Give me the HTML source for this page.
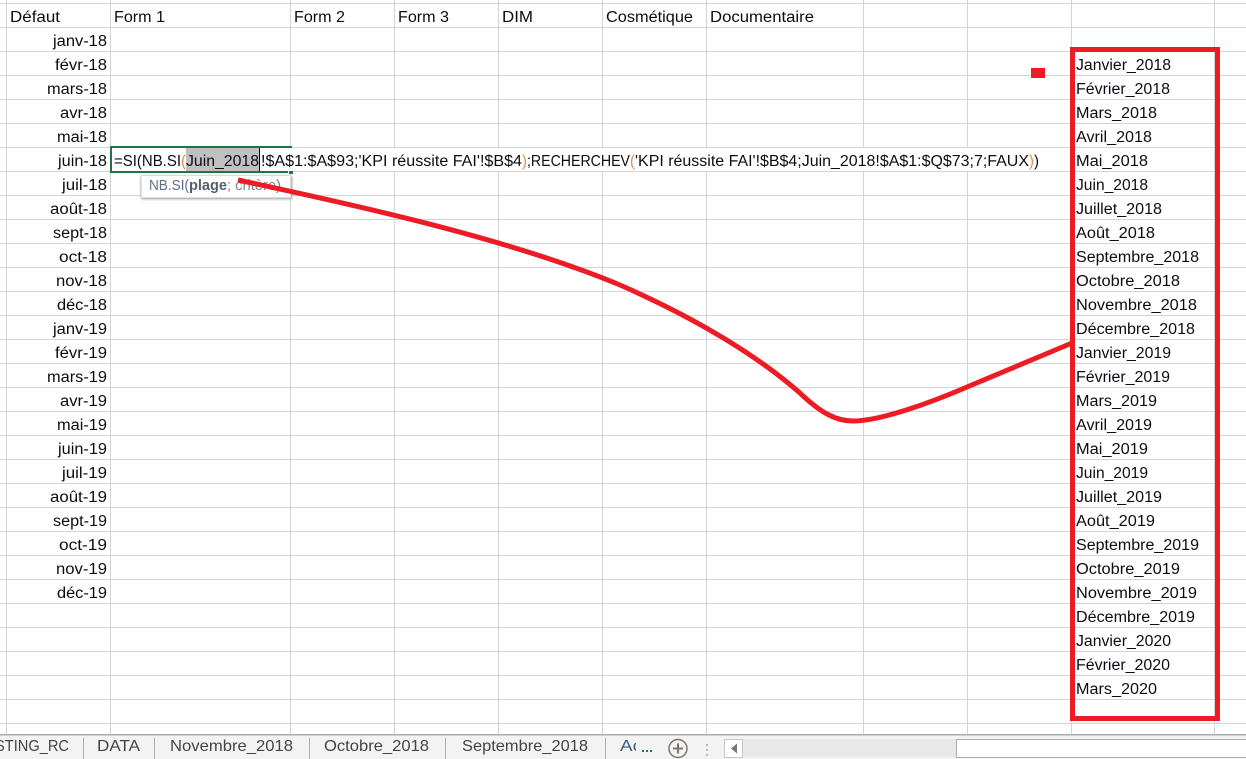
<!DOCTYPE html>
<html lang="fr"><head><meta charset="utf-8"><title>Excel</title>
<style>
html,body{margin:0;padding:0;background:#fff}
#p{position:relative;width:1246px;height:759px;overflow:hidden;background:#fff}
#g{position:absolute;left:0;top:0;width:1246px;height:734px;background-image:linear-gradient(#d4d4d4 1px,transparent 1px);background-size:100% 24px;background-position:0 3px}
.v{position:absolute;top:0;height:734px;width:1px;background:#d4d4d4}
svg{position:absolute;left:0;top:0}
text{font-family:"Liberation Sans",sans-serif;font-size:15.5px;fill:#0c0c14}
.t text{font-size:16px;fill:#444}
</style></head><body><div id="p">
<div id="g"></div>
<div class="v" style="left:6px"></div><div class="v" style="left:110px"></div><div class="v" style="left:290px"></div><div class="v" style="left:394px"></div><div class="v" style="left:498px"></div><div class="v" style="left:602px"></div><div class="v" style="left:706px"></div><div class="v" style="left:863px"></div><div class="v" style="left:967px"></div><div class="v" style="left:1071px"></div><div class="v" style="left:1214px"></div>
<svg width="1246" height="759" viewBox="0 0 1246 759">
<defs><filter id="s" x="-10%" y="-30%" width="120%" height="170%"><feGaussianBlur stdDeviation="1.2"/></filter></defs>
<g id="hdr">
<text x="10" y="22" textLength="50" lengthAdjust="spacingAndGlyphs">Défaut</text>
<text x="114" y="22" textLength="51" lengthAdjust="spacingAndGlyphs">Form 1</text>
<text x="294" y="22" textLength="51" lengthAdjust="spacingAndGlyphs">Form 2</text>
<text x="398" y="22" textLength="51" lengthAdjust="spacingAndGlyphs">Form 3</text>
<text x="502" y="22" textLength="31" lengthAdjust="spacingAndGlyphs">DIM</text>
<text x="606" y="22" textLength="87" lengthAdjust="spacingAndGlyphs">Cosmétique</text>
<text x="710" y="22" textLength="104" lengthAdjust="spacingAndGlyphs">Documentaire</text>
</g>
<g id="dates">
<text x="53" y="46" textLength="54" lengthAdjust="spacingAndGlyphs">janv-18</text>
<text x="55" y="70" textLength="52" lengthAdjust="spacingAndGlyphs">févr-18</text>
<text x="47" y="94" textLength="60" lengthAdjust="spacingAndGlyphs">mars-18</text>
<text x="60" y="118" textLength="47" lengthAdjust="spacingAndGlyphs">avr-18</text>
<text x="57" y="142" textLength="50" lengthAdjust="spacingAndGlyphs">mai-18</text>
<text x="58" y="166" textLength="49" lengthAdjust="spacingAndGlyphs">juin-18</text>
<text x="62" y="190" textLength="45" lengthAdjust="spacingAndGlyphs">juil-18</text>
<text x="50" y="214" textLength="57" lengthAdjust="spacingAndGlyphs">août-18</text>
<text x="53" y="238" textLength="54" lengthAdjust="spacingAndGlyphs">sept-18</text>
<text x="59" y="262" textLength="48" lengthAdjust="spacingAndGlyphs">oct-18</text>
<text x="56" y="286" textLength="51" lengthAdjust="spacingAndGlyphs">nov-18</text>
<text x="57" y="310" textLength="50" lengthAdjust="spacingAndGlyphs">déc-18</text>
<text x="53" y="334" textLength="54" lengthAdjust="spacingAndGlyphs">janv-19</text>
<text x="55" y="358" textLength="52" lengthAdjust="spacingAndGlyphs">févr-19</text>
<text x="47" y="382" textLength="60" lengthAdjust="spacingAndGlyphs">mars-19</text>
<text x="60" y="406" textLength="47" lengthAdjust="spacingAndGlyphs">avr-19</text>
<text x="57" y="430" textLength="50" lengthAdjust="spacingAndGlyphs">mai-19</text>
<text x="58" y="454" textLength="49" lengthAdjust="spacingAndGlyphs">juin-19</text>
<text x="62" y="478" textLength="45" lengthAdjust="spacingAndGlyphs">juil-19</text>
<text x="50" y="502" textLength="57" lengthAdjust="spacingAndGlyphs">août-19</text>
<text x="53" y="526" textLength="54" lengthAdjust="spacingAndGlyphs">sept-19</text>
<text x="59" y="550" textLength="48" lengthAdjust="spacingAndGlyphs">oct-19</text>
<text x="56" y="574" textLength="51" lengthAdjust="spacingAndGlyphs">nov-19</text>
<text x="57" y="598" textLength="50" lengthAdjust="spacingAndGlyphs">déc-19</text>
</g>
<g id="months">
<text x="1076" y="70" textLength="95" lengthAdjust="spacingAndGlyphs">Janvier_2018</text>
<text x="1076" y="94" textLength="94" lengthAdjust="spacingAndGlyphs">Février_2018</text>
<text x="1076" y="118" textLength="81" lengthAdjust="spacingAndGlyphs">Mars_2018</text>
<text x="1076" y="142" textLength="76" lengthAdjust="spacingAndGlyphs">Avril_2018</text>
<text x="1076" y="166" textLength="72" lengthAdjust="spacingAndGlyphs">Mai_2018</text>
<text x="1076" y="190" textLength="72" lengthAdjust="spacingAndGlyphs">Juin_2018</text>
<text x="1076" y="214" textLength="86" lengthAdjust="spacingAndGlyphs">Juillet_2018</text>
<text x="1076" y="238" textLength="79" lengthAdjust="spacingAndGlyphs">Août_2018</text>
<text x="1076" y="262" textLength="123" lengthAdjust="spacingAndGlyphs">Septembre_2018</text>
<text x="1076" y="286" textLength="104" lengthAdjust="spacingAndGlyphs">Octobre_2018</text>
<text x="1076" y="310" textLength="121" lengthAdjust="spacingAndGlyphs">Novembre_2018</text>
<text x="1076" y="334" textLength="119" lengthAdjust="spacingAndGlyphs">Décembre_2018</text>
<text x="1076" y="358" textLength="95" lengthAdjust="spacingAndGlyphs">Janvier_2019</text>
<text x="1076" y="382" textLength="94" lengthAdjust="spacingAndGlyphs">Février_2019</text>
<text x="1076" y="406" textLength="81" lengthAdjust="spacingAndGlyphs">Mars_2019</text>
<text x="1076" y="430" textLength="76" lengthAdjust="spacingAndGlyphs">Avril_2019</text>
<text x="1076" y="454" textLength="72" lengthAdjust="spacingAndGlyphs">Mai_2019</text>
<text x="1076" y="478" textLength="72" lengthAdjust="spacingAndGlyphs">Juin_2019</text>
<text x="1076" y="502" textLength="86" lengthAdjust="spacingAndGlyphs">Juillet_2019</text>
<text x="1076" y="526" textLength="79" lengthAdjust="spacingAndGlyphs">Août_2019</text>
<text x="1076" y="550" textLength="123" lengthAdjust="spacingAndGlyphs">Septembre_2019</text>
<text x="1076" y="574" textLength="104" lengthAdjust="spacingAndGlyphs">Octobre_2019</text>
<text x="1076" y="598" textLength="121" lengthAdjust="spacingAndGlyphs">Novembre_2019</text>
<text x="1076" y="622" textLength="119" lengthAdjust="spacingAndGlyphs">Décembre_2019</text>
<text x="1076" y="646" textLength="95" lengthAdjust="spacingAndGlyphs">Janvier_2020</text>
<text x="1076" y="670" textLength="94" lengthAdjust="spacingAndGlyphs">Février_2020</text>
<text x="1076" y="694" textLength="81" lengthAdjust="spacingAndGlyphs">Mars_2020</text>
</g>

<!-- edit overflow -->
<rect x="292" y="148" width="750" height="23" fill="#fff"/>
<rect x="111" y="148" width="181" height="24" fill="#fff"/>
<rect x="110" y="146" width="182" height="2" fill="#217346"/>
<rect x="110" y="146" width="2" height="27" fill="#217346"/>
<rect x="110" y="171" width="178" height="2" fill="#217346"/>
<rect x="289" y="171" width="4" height="3" fill="#217346"/>
<rect x="186" y="148" width="73" height="23" fill="#c0c0c0"/>
<rect x="259" y="148" width="1" height="23" fill="#000"/>
<g id="formula">
<text x="114" y="166" textLength="67" lengthAdjust="spacingAndGlyphs">=SI(NB.SI</text>
<text x="181" y="166" textLength="5" lengthAdjust="spacingAndGlyphs" style="fill:#e2904a">(</text>
<text x="186" y="166" textLength="73" lengthAdjust="spacingAndGlyphs">Juin_2018</text>
<text x="261" y="166" textLength="261" lengthAdjust="spacingAndGlyphs">!$A$1:$A$93;'KPI réussite FAI'!$B$4</text>
<text x="522" y="166" textLength="5" lengthAdjust="spacingAndGlyphs" style="fill:#e2904a">)</text>
<text x="527" y="166" textLength="103" lengthAdjust="spacingAndGlyphs">;RECHERCHEV</text>
<text x="630" y="166" textLength="5" lengthAdjust="spacingAndGlyphs" style="fill:#e2904a">(</text>
<text x="635" y="166" textLength="394" lengthAdjust="spacingAndGlyphs">'KPI réussite FAI'!$B$4;Juin_2018!$A$1:$Q$73;7;FAUX</text>
<text x="1029" y="166" textLength="5" lengthAdjust="spacingAndGlyphs" style="fill:#e2904a">)</text>
<text x="1034" y="166" textLength="5" lengthAdjust="spacingAndGlyphs">)</text>
</g>

<!-- tooltip -->
<rect x="141" y="176" width="151" height="23" fill="#999" filter="url(#s)"/>
<rect x="141.500" y="175.500" width="149" height="22" fill="#fff" stroke="#dcdcdc"/>
<text x="149" y="190" textLength="40" lengthAdjust="spacingAndGlyphs" style="font-size:14.500px;fill:#5f7186">NB.SI(</text>
<text x="189" y="190" textLength="38" lengthAdjust="spacingAndGlyphs" style="font-size:14.500px;font-weight:700;fill:#56606c">plage</text>
<text x="227" y="190" textLength="54" lengthAdjust="spacingAndGlyphs" style="font-size:14.500px;fill:#7a8490">; critère)</text>

<!-- red annotations -->
<path d="M238 180C330 200 500 235 620 285C700 320 760 358 800 393C820 412 835 421 853 421C880 421 930 403 967 387L1072 343" fill="none" stroke="#ed1c24" stroke-width="5" stroke-linejoin="round"/>
<rect x="1031" y="68" width="14" height="10" fill="#ed1c24"/>
<path d="M1070 47H1220V721H1070ZM1075 52V716H1215V52Z" fill="#ed1c24"/>

<!-- tab bar -->
<rect x="0" y="735" width="1246" height="24" fill="#f3f3f3"/>
<rect x="0" y="734" width="1246" height="1.500" fill="#ababab"/>
<g fill="#ababab">
<rect x="83" y="738" width="1" height="21"/><rect x="154" y="738" width="1" height="21"/><rect x="309" y="738" width="1" height="21"/><rect x="445" y="738" width="1" height="21"/><rect x="605" y="738" width="1" height="21"/>
</g>
<g class="t">
<text x="-5" y="751" textLength="74" lengthAdjust="spacingAndGlyphs">STING_RC</text>
<text x="97" y="751" textLength="43" lengthAdjust="spacingAndGlyphs">DATA</text>
<text x="170" y="751" textLength="123" lengthAdjust="spacingAndGlyphs">Novembre_2018</text>
<text x="324" y="751" textLength="105" lengthAdjust="spacingAndGlyphs">Octobre_2018</text>
<text x="462" y="751" textLength="126" lengthAdjust="spacingAndGlyphs">Septembre_2018</text>
<text x="620" y="751" textLength="22" lengthAdjust="spacingAndGlyphs" style="fill:#3a5a80">Ac</text>
</g>
<rect x="636" y="738" width="8" height="20" fill="#f3f3f3"/>
<g fill="#1f7a3e"><rect x="642" y="750" width="2" height="2"/><rect x="646" y="750" width="2" height="2"/><rect x="650" y="750" width="2" height="2"/></g>
<circle cx="678" cy="748.500" r="9" fill="none" stroke="#7d7773" stroke-width="1.500"/>
<path d="M678 743.500v10M673 748.500h10" stroke="#7d7773" stroke-width="2" fill="none"/>
<g fill="#b9b9b9"><rect x="706" y="744" width="2" height="2"/><rect x="706" y="749" width="2" height="2"/><rect x="706" y="754" width="2" height="2"/></g>
<rect x="743" y="739" width="213" height="18" fill="#e8e8e8"/>
<rect x="724.500" y="739.500" width="18" height="18" fill="#fff" stroke="#c6c6c6"/>
<path d="M737 743.500V753.500L731 748.500Z" fill="#777"/>
<rect x="956.500" y="739.500" width="290" height="18" fill="#fff" stroke="#ababab"/>
</svg>
</div></body></html>
